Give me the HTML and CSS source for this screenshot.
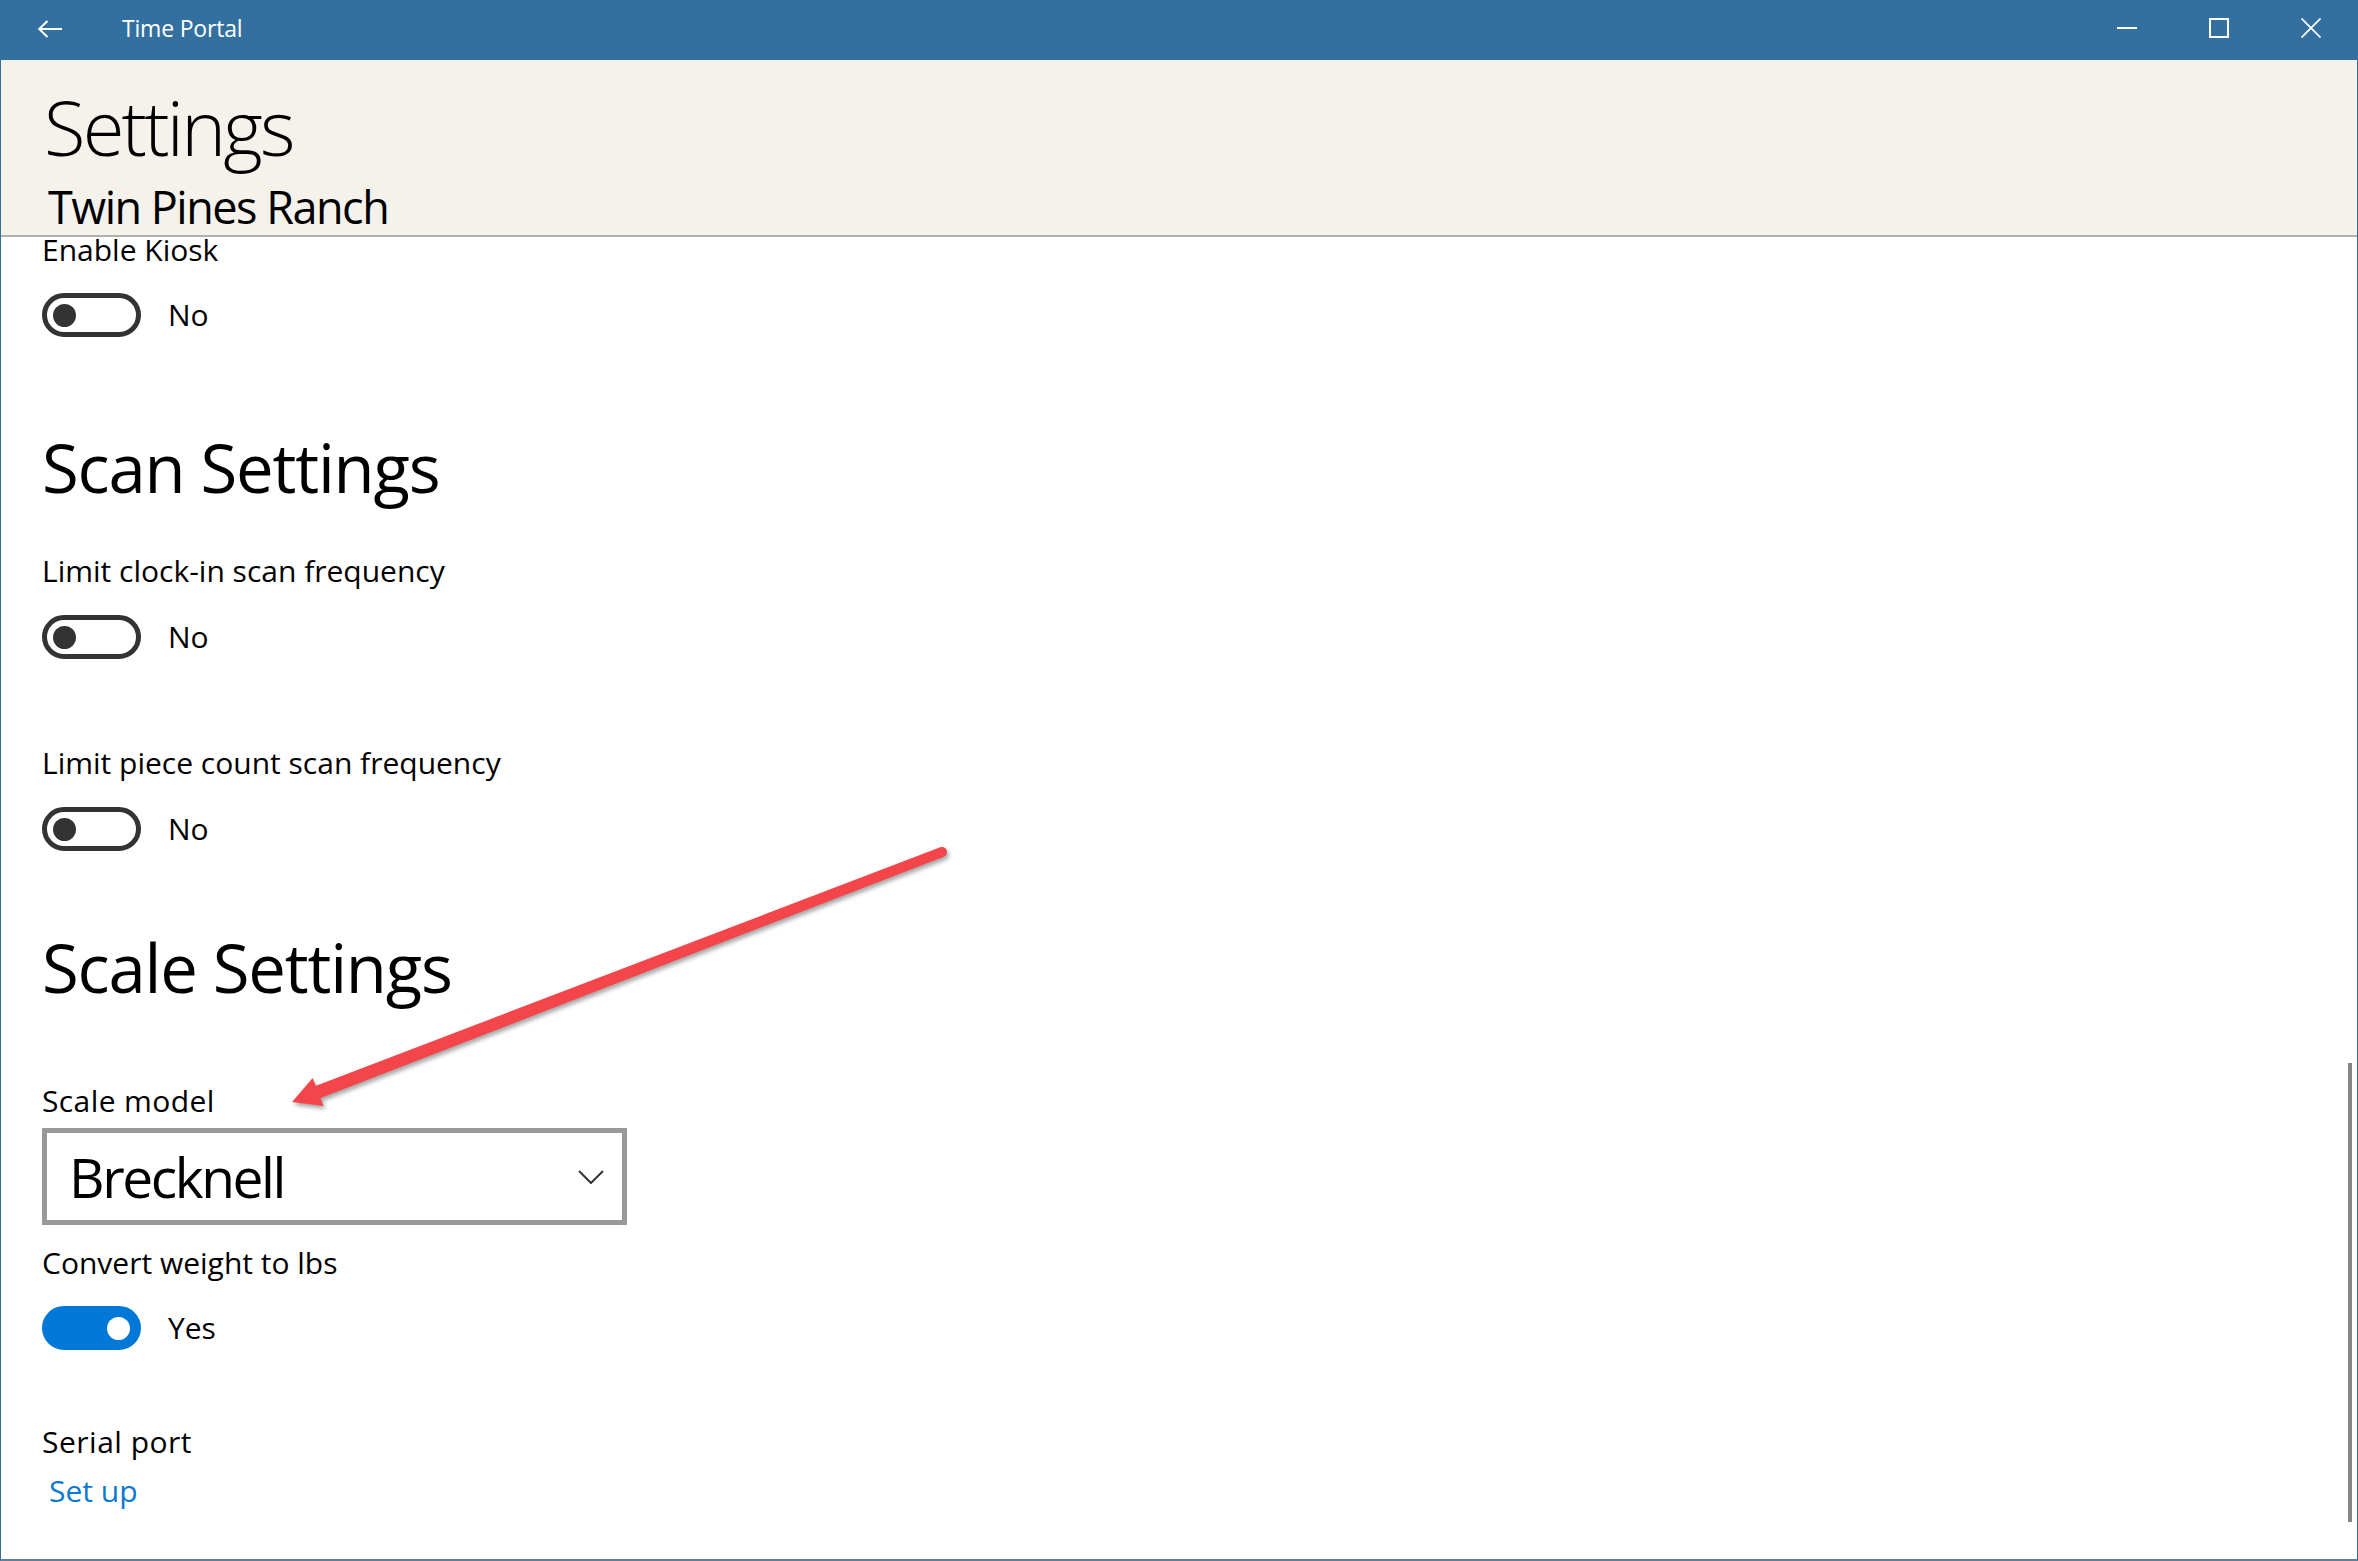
FILE: index.html
```html
<!DOCTYPE html>
<html lang="en">
<head>
<meta charset="utf-8">
<title>Time Portal</title>
<link rel="stylesheet" href="styles.css">
</head>
<body>
<div class="window">
  <header class="titlebar">
    <div class="back">
      <svg width="24" height="18" viewBox="0 0 24 18"><path d="M1 9 H24 M9.5 1 L1.2 9 L9.5 17" fill="none" stroke="#fff" stroke-width="2"/></svg>
    </div>
    <span class="app-title">Time Portal</span>
    <div class="caption">
      <div class="cap-btn"><svg width="20" height="20" viewBox="0 0 20 20"><path d="M0 10 H20" stroke="#fff" stroke-width="2"/></svg></div>
      <div class="cap-btn"><svg width="20" height="20" viewBox="0 0 20 20"><rect x="1" y="1" width="18" height="18" fill="none" stroke="#fff" stroke-width="2"/></svg></div>
      <div class="cap-btn"><svg width="20" height="20" viewBox="0 0 20 20"><path d="M0.5 0.5 L19.5 19.5 M19.5 0.5 L0.5 19.5" stroke="#fff" stroke-width="1.8"/></svg></div>
    </div>
  </header>

  <div class="page-header">
    <h1 class="page-title">Settings</h1>
    <div class="page-subtitle">Twin Pines Ranch</div>
  </div>

  <main class="content">
    <div class="scroll">
      <div class="label top">Enable Kiosk</div>
      <div class="toggle-row first">
        <span class="toggle"><span class="knob"></span></span>
        <span class="state">No</span>
      </div>

      <h2 class="section scan">Scan Settings</h2>
      <div class="label after-scan">Limit clock-in scan frequency</div>
      <div class="toggle-row">
        <span class="toggle"><span class="knob"></span></span>
        <span class="state">No</span>
      </div>

      <div class="label after-toggle">Limit piece count scan frequency</div>
      <div class="toggle-row">
        <span class="toggle"><span class="knob"></span></span>
        <span class="state">No</span>
      </div>

      <h2 class="section scale">Scale Settings</h2>
      <div class="label after-scale">Scale model</div>
      <div class="dropdown">
        <span class="dd-value">Brecknell</span>
        <svg class="chevron" width="26" height="14" viewBox="0 0 26 14"><polyline points="1,1 13,13 25,1" fill="none" stroke="#333" stroke-width="2"/></svg>
      </div>

      <div class="label after-dropdown">Convert weight to lbs</div>
      <div class="toggle-row last">
        <span class="toggle on"><span class="knob"></span></span>
        <span class="state">Yes</span>
      </div>

      <div class="label after-last">Serial port</div>
      <a class="link">Set up</a>
    </div>
    <div class="scrollbar"></div>
  </main>
</div>

<svg class="annotation" width="2358" height="1561" viewBox="0 0 2358 1561">
  <g fill="#f4464a">
    <circle cx="942" cy="852" r="5"/>
    <polygon points="940.2,847.3 943.8,856.7 314.8,1100.2 310.2,1088.0"/>
    <polygon points="292,1102 312.7,1077.9 323.5,1105.9"/>
  </g>
</svg>
</body>
</html>
```

FILE: styles.css
```css
html, body {
  margin: 0;
  padding: 0;
}

body {
  position: relative;
  width: 2358px;
  height: 1561px;
  overflow: hidden;
  background: #ffffff;
  font-family: "Open Sans", "Noto Sans", "DejaVu Sans", sans-serif;
  color: #000;
}

.window {
  width: 2358px;
  height: 1561px;
  box-sizing: border-box;
  display: flex;
  flex-direction: column;
  border-left: 1px solid #3370a0;
  border-right: 1px solid #3370a0;
  border-bottom: 2px solid #5f7f9e;
  background: #fff;
}

/* ---------- title bar ---------- */
.titlebar {
  flex: none;
  height: 60px;
  background: #3370a0;
  display: flex;
  align-items: center;
  color: #fff;
}

.back {
  width: 97px;
  height: 60px;
  display: flex;
  align-items: center;
  justify-content: center;
  padding-bottom: 2px;
  box-sizing: border-box;
}

.app-title {
  margin-left: 24px;
  font-size: 23px;
  line-height: 56px;
  padding-bottom: 4px;
  letter-spacing: -0.2px;
}

.caption {
  margin-left: auto;
  display: flex;
}

.cap-btn {
  width: 92px;
  height: 60px;
  box-sizing: border-box;
  padding-bottom: 4px;
  display: flex;
  align-items: center;
  justify-content: center;
}

/* ---------- page header ---------- */
.page-header {
  flex: none;
  height: 177px;
  box-sizing: border-box;
  background: #f5f2eb;
  border-bottom: 2px solid #b5b1a8;
  padding: 22px 0 0 41px;
}

.page-title {
  margin: 0;
  font-weight: 300;
  font-size: 76px;
  line-height: 90px;
  letter-spacing: -2.8px;
  padding-left: 2px;
}

.page-subtitle {
  margin-top: 9px;
  padding-left: 6px;
  font-size: 45px;
  line-height: 52px;
  letter-spacing: -1.5px;
}

/* ---------- content ---------- */
.content {
  flex: 1;
  position: relative;
  padding-left: 41px;
}

.label {
  font-size: 30px;
  line-height: 40px;
}

.label.top { line-height: 26px; }
.label.after-scan { margin-top: 44px; }
.label.after-toggle { margin-top: 84px; }
.label.after-scale { margin-top: 74px; letter-spacing: 0.4px; }
.label.after-dropdown { margin-top: 18px; }
.label.after-last { margin-top: 72px; letter-spacing: 0.5px; }

.toggle-row {
  margin-top: 24px;
  height: 44px;
  display: flex;
  align-items: center;
}

.toggle-row.first { margin-top: 30px; }
.toggle-row.last { margin-top: 23px; }

.toggle {
  width: 99px;
  height: 44px;
  box-sizing: border-box;
  border: 5px solid #333333;
  border-radius: 22px;
  padding-left: 6px;
  display: flex;
  align-items: center;
}

.knob {
  width: 23px;
  height: 23px;
  border-radius: 50%;
  background: #333333;
}

.toggle.on {
  background: #0078d7;
  border-color: #0078d7;
  justify-content: flex-end;
  padding-left: 0;
  padding-right: 6px;
}

.toggle.on .knob {
  background: #ffffff;
}

.state {
  margin-left: 27px;
  font-size: 30px;
  line-height: 44px;
}

.section {
  margin: 0;
  font-weight: 400;
  font-size: 67px;
  line-height: 80px;
  letter-spacing: -1.2px;
}

.section.scan { margin-top: 90px; }
.section.scale { margin-top: 76px; }

.dropdown {
  margin-top: 7px;
  width: 585px;
  height: 97px;
  box-sizing: border-box;
  border: 5px solid #999999;
  padding: 0 18px 0 22px;
  display: flex;
  align-items: center;
}

.dd-value {
  flex: 1;
  font-size: 55px;
  line-height: 55px;
  letter-spacing: -2.4px;
}

.chevron {
  flex: none;
}

.link {
  display: block;
  margin-top: 9px;
  margin-left: 7px;
  font-size: 30px;
  line-height: 40px;
  color: #0a78d4;
}

.scrollbar {
  position: absolute;
  right: 5px;
  top: 826px;
  width: 4px;
  height: 459px;
  background: #868686;
}

/* ---------- annotation arrow ---------- */
.annotation {
  position: absolute;
  left: 0;
  top: 0;
  pointer-events: none;
  filter: drop-shadow(2px 3px 2px rgba(0, 0, 0, 0.35));
}
```
